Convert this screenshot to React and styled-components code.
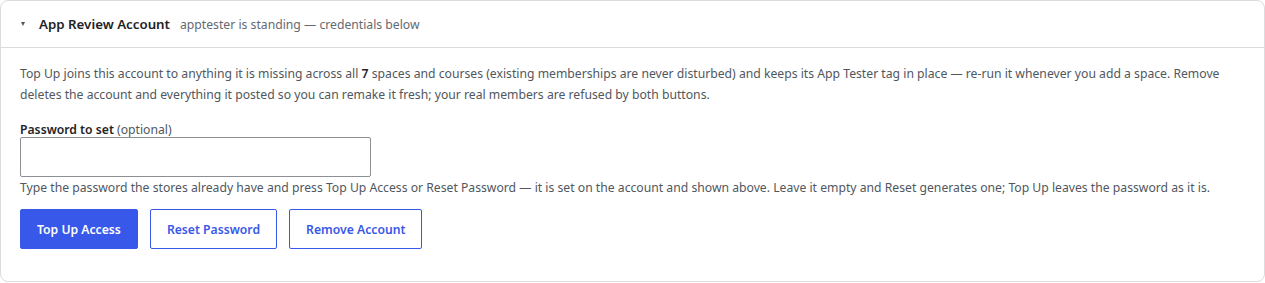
import React, { useState } from "react";
import styled, { createGlobalStyle } from "styled-components";

const Global = createGlobalStyle`
  body {
    margin: 0;
    background: #ffffff;
    font-family: "Noto Sans", "Open Sans", sans-serif;
  }
`;

const Card = styled.div`
  box-sizing: border-box;
  width: 1265px;
  height: 282px;
  border: 1px solid #dcdcde;
  border-radius: 8px;
  background: #fff;
  overflow: hidden;
`;

const Header = styled.div`
  display: flex;
  align-items: center;
  height: 46px;
  padding-left: 20px;
  border-bottom: 1px solid #dcdcde;
  cursor: pointer;
`;

const Caret = styled.span`
  width: 0;
  height: 0;
  border-left: 2.5px solid transparent;
  border-right: 2.5px solid transparent;
  border-top: 4px solid #50575e;
  margin-right: 14px;
`;

const Title = styled.span`
  font-size: 13.3px;
  font-weight: 600;
  color: #1d2327;
  margin-right: 10px;
`;

const Sub = styled.span`
  font-size: 12.2px;
  color: #646970;
`;

const Body = styled.div`
  padding: 15px 19px 0;
`;

const Para = styled.p`
  margin: 0;
  font-size: 12.2px;
  line-height: 21px;
  color: #50575e;
  strong {
    font-weight: 600;
    color: #1d2327;
  }
`;

const Label = styled.label`
  display: block;
  margin-top: 18px;
  font-size: 12.2px;
  line-height: 14px;
  font-weight: 600;
  color: #1d2327;
  span {
    font-weight: 400;
    color: #50575e;
  }
`;

const Input = styled.input`
  box-sizing: border-box;
  display: block;
  width: 351px;
  height: 40px;
  margin-top: 0;
  border: 1px solid #8c8f94;
  border-radius: 2px;
  font: inherit;
  padding: 0 8px;
`;

const Help = styled(Para)`
  margin-top: 0;
`;

const Actions = styled.div`
  display: flex;
  gap: 12px;
  margin-top: 11px;
`;

const Button = styled.button`
  box-sizing: border-box;
  height: 40px;
  padding: 0 16px;
  border-radius: 2px;
  font-family: inherit;
  font-size: 12.2px;
  font-weight: 600;
  cursor: pointer;
  border: 1px solid #3858e9;
  background: ${(p) => (p.$primary ? "#3858e9" : "#fff")};
  color: ${(p) => (p.$primary ? "#fff" : "#3858e9")};
`;

export default function App() {
  const [pw, setPw] = useState("");
  return (
    <>
      <Global />
      <Card>
        <Header>
          <Caret />
          <Title>App Review Account</Title>
          <Sub>apptester is standing — credentials below</Sub>
        </Header>
        <Body>
          <Para>
            Top Up joins this account to anything it is missing across all <strong>7</strong> spaces and
            courses (existing memberships are never disturbed) and keeps its App Tester tag in place —
            re-run it whenever you add a space. Remove deletes the account and everything it posted so
            you can remake it fresh; your real members are refused by both buttons.
          </Para>
          <Label>
            Password to set <span>(optional)</span>
          </Label>
          <Input type="text" value={pw} onChange={(e) => setPw(e.target.value)} />
          <Help>
            Type the password the stores already have and press Top Up Access or Reset Password — it is
            set on the account and shown above. Leave it empty and Reset generates one; Top Up leaves the
            password as it is.
          </Help>
          <Actions>
            <Button $primary>Top Up Access</Button>
            <Button>Reset Password</Button>
            <Button>Remove Account</Button>
          </Actions>
        </Body>
      </Card>
    </>
  );
}
